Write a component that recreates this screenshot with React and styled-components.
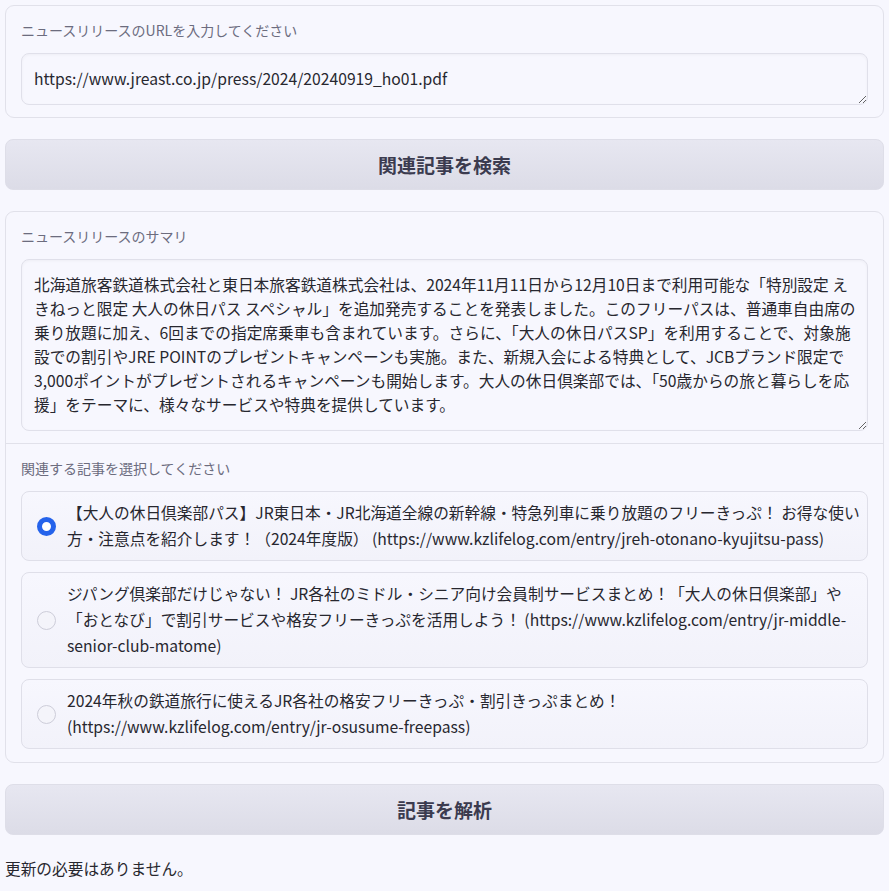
import React, { useState } from 'react';
import styled, { createGlobalStyle } from 'styled-components';

const GlobalStyle = createGlobalStyle`
  * { box-sizing: border-box; }
  html, body {
    margin: 0;
    background: #f7f7fe;
    font-family: "Noto Sans CJK JP", "Noto Sans", sans-serif;
    color: #27272f;
  }
`;

const Page = styled.div`
  display: flex;
  flex-direction: column;
  gap: 21px;
  padding: 5px;
`;

const Block = styled.div`
  background: #f7f7fe;
  border: 1px solid #e1e1ea;
  border-radius: 9px;
`;

const Section = styled.div`
  display: flex;
  flex-direction: column;
  gap: 13px;
  padding: 14px 15px 12px;
  & + & {
    border-top: 1px solid #e1e1ea;
    padding-bottom: 13px;
  }
`;

const Label = styled.span`
  font-size: 14px;
  line-height: 20px;
  color: #6c6c7e;
`;

const TextArea = styled.textarea`
  display: block;
  width: 100%;
  height: ${(p) => p.$h}px;
  padding: 13px 10px 13px 12px;
  font-family: inherit;
  font-size: 15.7px;
  line-height: 24px;
  color: #27272f;
  background: #f7f7fe;
  border: 1px solid #e0e0ea;
  border-radius: 8px;
  box-shadow: inset 0 1px 3px rgba(0, 0, 0, 0.04);
  outline: none;
  overflow: hidden;
  resize: vertical;
`;

const BigButton = styled.button`
  height: 51px;
  width: 100%;
  border: 1px solid #dedee8;
  border-radius: 8px;
  background: linear-gradient(to bottom, #e7e7f1, #dcdce7);
  font-family: inherit;
  font-size: 19px;
  font-weight: 700;
  color: #3b3b4f;
  cursor: pointer;
`;

const Options = styled.div`
  display: flex;
  flex-direction: column;
  gap: 11px;
`;

const Option = styled.label`
  display: flex;
  align-items: center;
  gap: 11px;
  padding: 8px 4px 8px 15px;
  border: 1px solid #dfdfe9;
  border-radius: 8px;
  background: linear-gradient(to bottom, #f7f7fe, #f2f2fa);
  cursor: pointer;
`;

const Radio = styled.input`
  appearance: none;
  flex: none;
  width: 19px;
  height: 19px;
  margin: 0;
  border-radius: 50%;
  border: 1px solid #cdcdd9;
  background: #f4f4fa;
  &:checked {
    border: 5.5px solid #2563eb;
    background: #ffffff;
  }
`;

const OptionText = styled.span`
  font-size: 15.7px;
  line-height: 26px;
  color: #27272f;
`;

const Message = styled.p`
  margin: 0;
  font-size: 15.7px;
  line-height: 26px;
  color: #27272f;
`;

const summary =
  '北海道旅客鉄道株式会社と東日本旅客鉄道株式会社は、2024年11月11日から12月10日まで利用可能な「特別設定 えきねっと限定 大人の休日パス スペシャル」を追加発売することを発表しました。このフリーパスは、普通車自由席の乗り放題に加え、6回までの指定席乗車も含まれています。さらに、「大人の休日パスSP」を利用することで、対象施設での割引やJRE POINTのプレゼントキャンペーンも実施。また、新規入会による特典として、JCBブランド限定で3,000ポイントがプレゼントされるキャンペーンも開始します。大人の休日倶楽部では、「50歳からの旅と暮らしを応援」をテーマに、様々なサービスや特典を提供しています。';

const articles = [
  '【大人の休日倶楽部パス】JR東日本・JR北海道全線の新幹線・特急列車に乗り放題のフリーきっぷ！ お得な使い方・注意点を紹介します！（2024年度版） (https://www.kzlifelog.com/entry/jreh-otonano-kyujitsu-pass)',
  'ジパング倶楽部だけじゃない！ JR各社のミドル・シニア向け会員制サービスまとめ！「大人の休日倶楽部」や「おとなび」で割引サービスや格安フリーきっぷを活用しよう！ (https://www.kzlifelog.com/entry/jr-middle-senior-club-matome)',
  '2024年秋の鉄道旅行に使えるJR各社の格安フリーきっぷ・割引きっぷまとめ！ (https://www.kzlifelog.com/entry/jr-osusume-freepass)',
];

export default function App() {
  const [selected, setSelected] = useState(0);

  return (
    <Page>
      <GlobalStyle />
      <Block>
        <Section>
          <Label>ニュースリリースのURLを入力してください</Label>
          <TextArea
            $h={52}
            defaultValue="https://www.jreast.co.jp/press/2024/20240919_ho01.pdf"
          />
        </Section>
      </Block>

      <BigButton>関連記事を検索</BigButton>

      <Block>
        <Section>
          <Label>ニュースリリースのサマリ</Label>
          <TextArea $h={172} defaultValue={summary} />
        </Section>
        <Section>
          <Label>関連する記事を選択してください</Label>
          <Options>
            {articles.map((text, i) => (
              <Option key={i}>
                <Radio
                  type="radio"
                  name="article"
                  checked={selected === i}
                  onChange={() => setSelected(i)}
                />
                <OptionText>{text}</OptionText>
              </Option>
            ))}
          </Options>
        </Section>
      </Block>

      <BigButton>記事を解析</BigButton>

      <Message>更新の必要はありません。</Message>
    </Page>
  );
}
